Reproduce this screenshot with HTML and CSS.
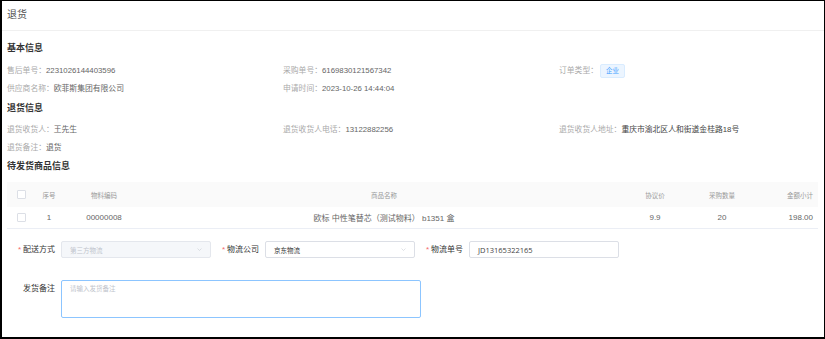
FILE: index.html
```html
<!DOCTYPE html>
<html lang="zh-CN">
<head>
    <meta charset="UTF-8">
    <meta name="viewport" content="width=device-width, initial-scale=1.0">
    <title>退货</title>
    <link rel="stylesheet" href="styles.css">
</head>
<body>
    <div class="page">
        <div class="page-head">退货</div>
        <div class="page-body">
            <h3 class="section-title first">基本信息</h3>
            <div class="info-grid">
                <div class="info-item"><span class="label">售后单号：</span><span class="value">2231026144403596</span></div>
                <div class="info-item"><span class="label">采购单号：</span><span class="value">6169830121567342</span></div>
                <div class="info-item"><span class="label">订单类型：</span><span class="tag">企业</span></div>
                <div class="info-item"><span class="label">供应商名称：</span><span class="value">欧菲斯集团有限公司</span></div>
                <div class="info-item"><span class="label">申请时间：</span><span class="value">2023-10-26 14:44:04</span></div>
            </div>

            <h3 class="section-title">退货信息</h3>
            <div class="info-grid">
                <div class="info-item"><span class="label">退货收货人：</span><span class="value">王先生</span></div>
                <div class="info-item"><span class="label">退货收货人电话：</span><span class="value">13122882256</span></div>
                <div class="info-item"><span class="label">退货收货人地址：</span><span class="value dark">重庆市渝北区人和街道金桂路18号</span></div>
                <div class="info-item"><span class="label">退货备注：</span><span class="value">退货</span></div>
            </div>

            <h3 class="section-title last">待发货商品信息</h3>
            <table class="goods">
                <colgroup>
                    <col style="width: 28px">
                    <col style="width: 28px">
                    <col style="width: 82px">
                    <col style="width: 478px">
                    <col style="width: 64px">
                    <col style="width: 70px">
                    <col>
                </colgroup>
                <thead>
                    <tr>
                        <th><span class="checkbox"></span></th>
                        <th>序号</th>
                        <th>物料编码</th>
                        <th>商品名称</th>
                        <th>协议价</th>
                        <th>采购数量</th>
                        <th class="right">金额小计</th>
                    </tr>
                </thead>
                <tbody>
                    <tr>
                        <td><span class="checkbox"></span></td>
                        <td>1</td>
                        <td>00000008</td>
                        <td>欧标 中性笔替芯（测试物料） b1351 盒</td>
                        <td>9.9</td>
                        <td>20</td>
                        <td class="right">198.00</td>
                    </tr>
                </tbody>
            </table>

            <div class="ship-form">
                <div class="form-row">
                    <div class="form-item">
                        <label class="form-label required">配送方式</label>
                        <div class="select disabled">
                            <span>第三方物流</span>
                            <svg class="arrow" viewBox="0 0 10 6"><polyline points="1,1 5,5 9,1" /></svg>
                        </div>
                    </div>
                    <div class="form-item">
                        <label class="form-label required">物流公司</label>
                        <div class="select">
                            <span>京东物流</span>
                            <svg class="arrow" viewBox="0 0 10 6"><polyline points="1,1 5,5 9,1" /></svg>
                        </div>
                    </div>
                    <div class="form-item">
                        <label class="form-label required">物流单号</label>
                        <div class="input">JD13165322165</div>
                    </div>
                </div>
                <div class="form-row remark">
                    <div class="form-item">
                        <label class="form-label">发货备注</label>
                        <div class="textarea">请输入发货备注</div>
                    </div>
                </div>
            </div>
        </div>
    </div>
</body>
</html>
```

FILE: styles.css
```css
html, body {
    margin: 0;
    height: 100%;
}
body {
    background: #000;
    font-family: "Liberation Sans", "Noto Sans CJK SC", sans-serif;
    color: #606266;
}
.page {
    background: #fff;
    margin: 1px 1px 0 2px;
    height: calc(100vh - 3px);
    overflow: hidden;
}
.page-head {
    height: 29px;
    line-height: 28px;
    padding-left: 5px;
    font-size: 10px;
    color: #555;
    border-bottom: 1px solid #f0f0f0;
}
.page-body {
    padding: 0 4px 0 5px;
}
.section-title {
    margin: 3px 0 6px;
    height: 14px;
    line-height: 14px;
    font-size: 9px;
    font-weight: bold;
    color: #333;
}
.section-title.first {
    margin-top: 10px;
    margin-bottom: 7px;
}
.section-title.last {
    margin-top: 2px;
    margin-bottom: 9px;
}
.info-grid {
    display: grid;
    grid-template-columns: 276px 276px 1fr;
}
.info-item {
    height: 18px;
    line-height: 18px;
    font-size: 7.8px;
    white-space: nowrap;
}
.label {
    color: #aaa;
}
.value {
    color: #666;
}
.value.dark {
    color: #444;
}
.tag {
    display: inline-block;
    height: 12px;
    line-height: 12px;
    padding: 0 5px;
    margin-left: 2px;
    font-size: 6.5px;
    color: #409eff;
    background: #ecf5ff;
    border: 1px solid #d9ecff;
    border-radius: 2px;
    vertical-align: middle;
}

table.goods {
    width: 811px;
    border-collapse: collapse;
    table-layout: fixed;
}
.goods th {
    height: 25px;
    background: #fafafa;
    font-size: 6.5px;
    font-weight: normal;
    color: #999;
    text-align: center;
    padding: 0;
}
.goods td {
    height: 21px;
    font-size: 8px;
    color: #666;
    text-align: center;
    padding: 0;
    border-bottom: 1px solid #ebeef5;
    white-space: nowrap;
}
.goods .right {
    text-align: right;
    padding-right: 5px;
}
.checkbox {
    display: inline-block;
    width: 7px;
    height: 7px;
    border: 1px solid #dcdfe6;
    border-radius: 1px;
    background: #fff;
    vertical-align: middle;
}

.ship-form {
    padding-top: 12px;
}
.form-row {
    display: flex;
}
.form-row.remark {
    margin-top: 22px;
}
.form-item {
    display: flex;
    align-items: flex-start;
    width: 204px;
}
.remark .form-item {
    width: auto;
}
.form-label {
    width: 48px;
    padding-right: 6px;
    text-align: right;
    font-size: 8px;
    line-height: 17px;
    color: #333;
    flex-shrink: 0;
}
.form-label.required::before {
    content: "*";
    color: #f56c6c;
    margin-right: 2px;
}
.select, .input {
    box-sizing: border-box;
    width: 150px;
    height: 17px;
    border: 1px solid #dcdfe6;
    border-radius: 2px;
    padding: 0 8px;
    display: flex;
    align-items: center;
    justify-content: space-between;
    font-size: 6.5px;
    color: #333;
    background: #fff;
}
.select.disabled {
    background: #f5f7fa;
    border-color: #e4e7ed;
    color: #c0c4cc;
}
.input {
    font-family: "Open Sans", "Liberation Sans", sans-serif;
    font-size: 7.5px;
    color: #444;
}
.arrow {
    width: 5px;
    height: 3px;
    fill: none;
    stroke: #c0c4cc;
    stroke-width: 1;
}
.remark .form-label {
    line-height: 18px;
}
.textarea {
    box-sizing: border-box;
    width: 360px;
    height: 38px;
    border: 1px solid #8cc5ff;
    border-radius: 2px;
    padding: 3px 8px;
    font-size: 6.5px;
    line-height: 10px;
    color: #c0c4cc;
}
```
